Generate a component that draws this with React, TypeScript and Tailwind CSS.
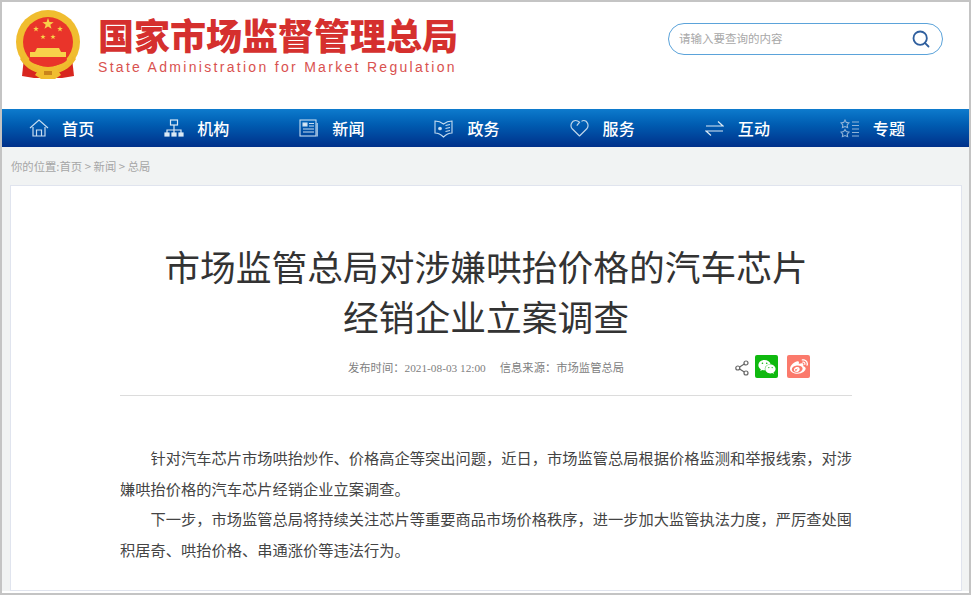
import { Search } from "lucide-react";
import { FaWeibo, FaWeixin } from "react-icons/fa";

const cjk = "font-['Noto_Sans_CJK_SC',sans-serif]";
const mixed = "font-['Liberation_Serif','Noto_Sans_CJK_SC',serif]";

function Emblem() {
  const star = (x: number, y: number, r: number) => {
    const pts = Array.from({ length: 10 }, (_, i) => {
      const a = (Math.PI / 5) * i - Math.PI / 2;
      const d = i % 2 === 0 ? r : r * 0.4;
      return `${x + d * Math.cos(a)},${y + d * Math.sin(a)}`;
    });
    return <polygon points={pts.join(" ")} fill="#f8d24a" />;
  };
  return (
    <svg width="68" height="72" viewBox="0 0 68 72">
      <path d="M10 48 L8 66 L20 68 L48 68 L60 66 L58 48 Z" fill="#d8261f" />
      <circle cx="34" cy="32" r="32" fill="#f0bd2f" />
      <circle cx="34" cy="32" r="25" fill="#e9342a" />
      {star(34, 14, 6)}
      {star(22, 19, 3)}
      {star(46, 19, 3)}
      {star(29, 27, 2.8)}
      {star(39, 27, 2.8)}
      <path d="M23 38 H45 L47 42 H52 V47 H16 V42 H21 Z" fill="#f8d24a" />
      <path d="M16 47 H52 L53 50 C46 58 22 58 15 50 Z" fill="#e9342a" />
      <path d="M9 46 C14 57 26 61 34 61 C42 61 54 57 59 46 L62 49 C56 59 46 64 34 64 C22 64 12 59 6 49 Z" fill="#efb92c" />
      <path d="M25 59 H43 L47 65 L41 69 H27 L21 65 Z" fill="#f0bd2f" />
      <path d="M30 61 H38 V65 H30 Z" fill="#c9841b" />
    </svg>
  );
}

function HomeIcon() {
  return (
    <svg width="20" height="20" viewBox="0 0 20 20" fill="none" stroke="#c5dcf0" strokeWidth="1.2">
      <path d="M1 10 L10 2 L19 10" />
      <path d="M4 9 V18 H16 V9" />
      <path d="M7.5 18 V12 H12.5 V18" />
    </svg>
  );
}

function OrgIcon() {
  return (
    <svg width="20" height="18" viewBox="0 0 20 18" fill="none" stroke="#dbe9f5" strokeWidth="1.2">
      <rect x="6.5" y="1" width="7" height="5" />
      <path d="M10 6 V11 M3 14 V11 H17 V14 M10 11 V14" />
      <rect x="1" y="14" width="4" height="3" fill="#dbe9f5" />
      <rect x="8" y="14" width="4" height="3" fill="#dbe9f5" />
      <rect x="15" y="14" width="4" height="3" fill="#dbe9f5" />
    </svg>
  );
}

function NewsIcon() {
  return (
    <svg width="19" height="18" viewBox="0 0 19 18" fill="none" stroke="#c5dcf0" strokeWidth="1.1">
      <rect x="1" y="1" width="16" height="16" />
      <rect x="4" y="4" width="4" height="3" fill="#dbe9f5" />
      <path d="M10 4.5 H15 M10 7 H15 M4 10 H15 M4 13 H15" />
      <path d="M18.2 4 V17.5" />
    </svg>
  );
}

function GovIcon() {
  return (
    <svg width="19" height="19" viewBox="0 0 19 19" fill="none" stroke="#c5dcf0" strokeWidth="1.1">
      <path d="M1 2 C4 2 7 3 9.5 5 C12 3 15 2 18 2 V14 C15 14 12 15.5 9.5 18 C7 15.5 4 14 1 14 Z" />
      <circle cx="6" cy="9.5" r="1.3" fill="#dbe9f5" />
      <path d="M11.5 6.5 L16 5.5 M11.5 9.5 L16 8.5 M11.5 12.5 L16 11.5" />
    </svg>
  );
}

function HeartIcon() {
  return (
    <svg width="19" height="18" viewBox="0 0 19 18" fill="none" stroke="#bcd5ea" strokeWidth="1.2">
      <path d="M9.5 17 L2.2 9.8 C-0.4 6.8 1.6 1.5 5.6 1.5 C7.2 1.5 8.2 2 9.5 3.2 L6.8 6.6 M11.5 2.4 C12.2 1.8 13 1.5 13.8 1.5 C17.4 1.5 19.4 6.8 16.8 9.8 L9.5 17" />
    </svg>
  );
}

function SwapIcon() {
  return (
    <svg width="19" height="17" viewBox="0 0 19 17" fill="none" stroke="#dbe9f5" strokeWidth="1.2">
      <path d="M1 6 H18 L13 1.5" />
      <path d="M18 11 H1 L6 15.5" />
    </svg>
  );
}

function TopicIcon() {
  return (
    <svg width="20" height="19" viewBox="0 0 20 19" fill="none" stroke="#8fb3d8" strokeWidth="1.1">
      <path d="M5 1 L6.3 3.4 L9 3.9 L7.2 6 L7.6 8.6 L5 7.5 L2.4 8.6 L2.8 6 L1 3.9 L3.7 3.4 Z" />
      <path d="M5 10.5 L6.3 12.6 L9 13.1 L7.2 15.1 L7.6 17.7 L5 16.6 L2.4 17.7 L2.8 15.1 L1 13.1 L3.7 12.6 Z" />
      <path d="M12 3 H19 M12 6.5 H19 M12 10 H19 M12 13.5 H19 M12 17 H19" />
    </svg>
  );
}

function ShareIcon() {
  return (
    <svg width="14" height="16" viewBox="0 0 14 16" fill="none" stroke="#666" strokeWidth="1.2">
      <circle cx="2.8" cy="8" r="2" />
      <circle cx="11" cy="3" r="2" />
      <circle cx="11" cy="13" r="2" />
      <path d="M4.6 7 L9.3 4 M4.6 9 L9.3 12" />
    </svg>
  );
}

const navItems = [
  { label: "首页", icon: <HomeIcon /> },
  { label: "机构", icon: <OrgIcon /> },
  { label: "新闻", icon: <NewsIcon /> },
  { label: "政务", icon: <GovIcon /> },
  { label: "服务", icon: <HeartIcon /> },
  { label: "互动", icon: <SwapIcon /> },
  { label: "专题", icon: <TopicIcon /> },
];

export default function App() {
  return (
    <div className={`h-[595px] w-[971px] overflow-hidden border-2 border-[#c4c4c4] bg-white ${cjk}`}>
      <header className="flex h-[107px] pl-[12px] pt-[8px]">
        <Emblem />
        <div className="ml-[16px] w-[363px] shrink-0 pt-[2px]">
          <div className="text-[36px] leading-[44px] font-black whitespace-nowrap text-[#d5302e]">
            国家市场监督管理总局
          </div>
          <div className="mt-[3px] font-['Liberation_Sans',sans-serif] text-[14px] leading-[16px] tracking-[2.3px] whitespace-nowrap text-[#d9524f]">
            State Administration for Market Regulation
          </div>
        </div>
        <div className="mt-[13px] ml-[207px] flex h-[32px] w-[275px] items-center justify-between rounded-full border-[1.5px] border-[#5ba3da] pr-[11px] pl-[10px]">
          <span className="text-[11.5px] text-[#a8a8a8]">请输入要查询的内容</span>
          <Search size={20} strokeWidth={2.2} className="text-[#2f5f9e]" />
        </div>
      </header>

      <nav className="grid h-[38px] grid-cols-[repeat(7,135.15px)] items-center bg-gradient-to-b from-[#0e7bcd] to-[#00308a] pl-[27px]">
        {navItems.map((item) => (
          <div key={item.label} className="flex items-center">
            <span className="flex w-[33px]">{item.icon}</span>
            <span className="text-[16px] leading-[20px] font-medium tracking-[0.2px] text-white">{item.label}</span>
          </div>
        ))}
      </nav>

      <div className="h-[444px] bg-[#f1f3f3] px-[8px]">
        <div className="flex h-[38px] items-center pt-[1px] pl-[1px] text-[11.35px] text-[#a6a6a6]">
          你的位置:首页 &gt; 新闻 &gt; 总局
        </div>
        <main className="h-[406px] w-[952px] border border-[#e0e4ee] bg-white px-[109px] pt-[55px]">
          <h1 className="text-center text-[35.75px] leading-[50px] font-normal text-[#333]">
            市场监管总局对涉嫌哄抬价格的汽车芯片
            <br />
            经销企业立案调查
          </h1>
          <div className="mt-[13px] flex h-[42px] items-start border-b border-[#dcdcdc] pt-[1px] pl-[228px]">
            <div className={`mt-[3px] flex h-[20px] items-center gap-[14px] text-[11.3px] whitespace-nowrap text-[#808080] ${mixed}`}>
              <span>发布时间：2021-08-03 12:00</span>
              <span>信息来源：市场监管总局</span>
            </div>
            <span className="mt-[5px] ml-[111px]">
              <ShareIcon />
            </span>
            <span className="ml-[6px] flex h-[23px] w-[23px] items-center justify-center rounded-[2px] bg-[#0fb90f] text-white">
              <FaWeixin size={18} />
            </span>
            <span className="ml-[9px] flex h-[23px] w-[23px] items-center justify-center rounded-[2px] bg-[#fb7a6c] text-white">
              <FaWeibo size={18} />
            </span>
          </div>
          <div className="mt-[46px] text-[15.25px] leading-[30.5px] text-[#444]">
            <p className="indent-[30.5px]">
              针对汽车芯片市场哄抬炒作、价格高企等突出问题，近日，市场监管总局根据价格监测和举报线索，对涉嫌哄抬价格的汽车芯片经销企业立案调查。
            </p>
            <p className="indent-[30.5px]">
              下一步，市场监管总局将持续关注芯片等重要商品市场价格秩序，进一步加大监管执法力度，严厉查处囤积居奇、哄抬价格、串通涨价等违法行为。
            </p>
          </div>
        </main>
      </div>
    </div>
  );
}
